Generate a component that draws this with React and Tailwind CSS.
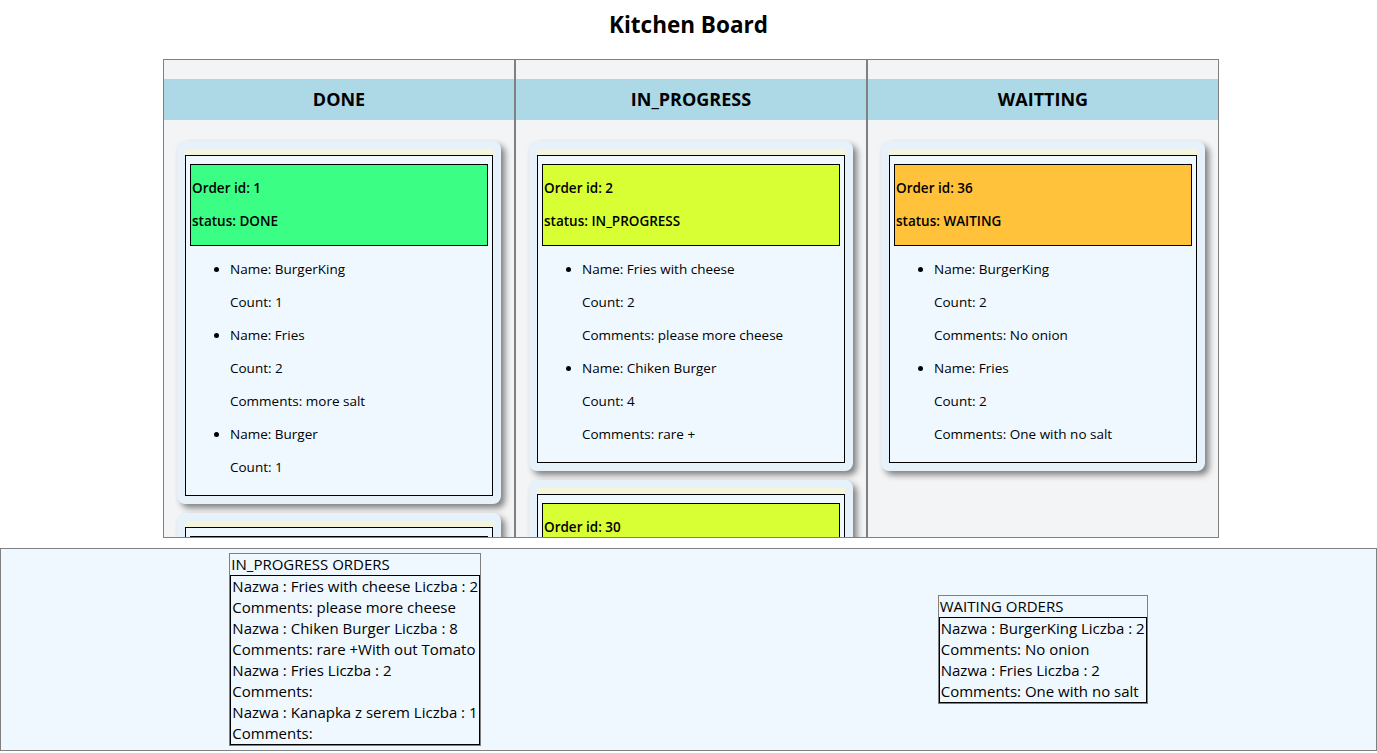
import React from 'react';

const columns = [
  {
    title: 'DONE',
    color: 'bg-[#3aff84]',
    orders: [
      {
        id: 1,
        status: 'DONE',
        items: [
          { name: 'BurgerKing', count: 1 },
          { name: 'Fries', count: 2, comments: 'more salt' },
          { name: 'Burger', count: 1 },
        ],
      },
      {
        id: 4,
        status: 'DONE',
        items: [{ name: 'Fries', count: 1 }],
      },
    ],
  },
  {
    title: 'IN_PROGRESS',
    color: 'bg-[#d8ff33]',
    orders: [
      {
        id: 2,
        status: 'IN_PROGRESS',
        items: [
          { name: 'Fries with cheese', count: 2, comments: 'please more cheese' },
          { name: 'Chiken Burger', count: 4, comments: 'rare +' },
        ],
      },
      {
        id: 30,
        status: 'IN_PROGRESS',
        items: [
          { name: 'Chiken Burger', count: 4, comments: 'With out Tomato' },
          { name: 'Fries', count: 2 },
          { name: 'Kanapka z serem', count: 1 },
        ],
      },
    ],
  },
  {
    title: 'WAITTING',
    color: 'bg-[#ffc23a]',
    orders: [
      {
        id: 36,
        status: 'WAITING',
        items: [
          { name: 'BurgerKing', count: 2, comments: 'No onion' },
          { name: 'Fries', count: 2, comments: 'One with no salt' },
        ],
      },
    ],
  },
];

const inProgressSummary = [
  'Nazwa : Fries with cheese Liczba : 2',
  'Comments: please more cheese',
  'Nazwa : Chiken Burger Liczba : 8',
  'Comments: rare +With out Tomato',
  'Nazwa : Fries Liczba : 2',
  'Comments:',
  'Nazwa : Kanapka z serem Liczba : 1',
  'Comments:',
];

const waitingSummary = [
  'Nazwa : BurgerKing Liczba : 2',
  'Comments: No onion',
  'Nazwa : Fries Liczba : 2',
  'Comments: One with no salt',
];

const OrderCard = ({ order, color }) => (
  <div className="shrink-0 rounded-[8px] bg-[#e6f1fa] p-[8px] shadow-[4px_4px_6px_#808080]">
    <div className="bg-[#f5f5dc] pt-[6px]">
      <div className="border border-black bg-[#f0f8ff] px-[4px] pb-[4px] pt-[8px]">
        <div className={`flex flex-col gap-[14px] border border-black py-[14px] pl-[1px] font-semibold ${color}`}>
          <p>Order id: {order.id}</p>
          <p>status: {order.status}</p>
        </div>
        <ul className="list-disc py-[14px] pl-[40px]">
          {order.items.map((item, i) => (
            <li key={i} className="flex flex-col gap-[14px] [&:not(:first-child)]:mt-[14px]">
              <p className="list-item">Name: {item.name}</p>
              <p>Count: {item.count}</p>
              {item.comments && <p>Comments: {item.comments}</p>}
            </li>
          ))}
        </ul>
      </div>
    </div>
  </div>
);

const SummaryTable = ({ title, rows }) => (
  <div className="border border-[#808080] text-[15px] leading-[21px]">
    <div className="px-[1px]">{title}</div>
    <div className="border border-black px-[1px]">
      {rows.map((r, i) => (
        <div key={i}>{r}</div>
      ))}
    </div>
  </div>
);

export default function App() {
  return (
    <div className="min-h-screen bg-white text-black" style={{ fontFamily: '"Open Sans", "Noto Sans", sans-serif' }}>
      <h1 className="pt-[9px] text-center text-[22.5px] font-bold leading-[32px]">Kitchen Board</h1>
      <div className="ml-[163px] mt-[18px] flex w-[1056px]">
        {columns.map((col) => (
          <div key={col.title} className="flex h-[479px] w-[352px] flex-col overflow-hidden border border-[#808080] bg-[#f3f4f6] pt-[19px]">
            <div className="flex h-[41px] shrink-0 items-center justify-center bg-[#add8e6] text-[18px] font-bold">
              {col.title}
            </div>
            <div className="flex flex-col gap-[9px] px-[13px] pt-[21px] text-[13.5px] leading-[19px]">
              {col.orders.map((o) => (
                <OrderCard key={o.id} order={o} color={col.color} />
              ))}
            </div>
          </div>
        ))}
      </div>
      <div className="mt-[10px] flex h-[203px] items-center justify-around border border-[#808080] bg-[#f0f8ff]">
        <SummaryTable title="IN_PROGRESS ORDERS" rows={inProgressSummary} />
        <SummaryTable title="WAITING ORDERS" rows={waitingSummary} />
      </div>
    </div>
  );
}
